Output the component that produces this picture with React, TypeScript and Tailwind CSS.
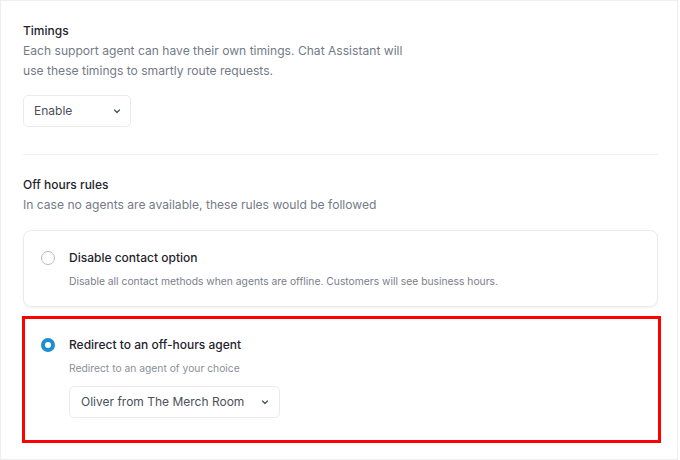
import React from "react";

function Chevron() {
  return (
    <svg width="10" height="10" viewBox="0 0 10 10" fill="none">
      <path d="M2.5 4 L5 6.5 L7.5 4" stroke="#4b5563" strokeWidth="1.3" strokeLinecap="round" strokeLinejoin="round" />
    </svg>
  );
}

export default function App() {
  return (
    <div className="w-[680px] h-[460px] bg-white" style={{ fontFamily: "Inter, 'Noto Sans', sans-serif" }}>
      <div className="w-[678px] h-[460px] border border-[#eeeeee] bg-white pl-[22px] pr-[20px] pt-[21px]">
        <div className="text-[12px] leading-[18px] font-medium text-[#1f242e]">Timings</div>
        <div className="mt-[1px] text-[12.1px] leading-[20px] text-[#747b87] w-[400px]">
          Each support agent can have their own timings. Chat Assistant will use these timings to smartly route requests.
        </div>
        <div className="mt-[14px] w-[108px] h-[32px] rounded-[5px] border border-[#ebebeb] flex items-center justify-between pl-[10px] pr-[8px]">
          <span className="text-[12px] text-[#4b505a]">Enable</span>
          <Chevron />
        </div>
        <div className="mt-[27px] h-px bg-[#f0f0f0] w-[635px]" />
        <div className="mt-[21px] text-[12px] leading-[18px] font-medium text-[#1f242e]">Off hours rules</div>
        <div className="mt-[1px] text-[12.1px] leading-[20px] text-[#747b87]">
          In case no agents are available, these rules would be followed
        </div>
        <div className="mt-[15px] w-[635px] h-[77px] rounded-[8px] border border-[#ebebeb] shadow-[0_1px_2px_rgba(0,0,0,0.06)] flex pl-[17px] pt-[19px]">
          <div className="w-[14px] h-[14px] rounded-full border border-[#b5b9bf] mt-[1px]" />
          <div className="ml-[14px]">
            <div className="text-[12px] leading-[16px] font-medium text-[#1f242e]">Disable contact option</div>
            <div className="mt-[8px] text-[10.3px] leading-[14px] text-[#7a808a]">
              Disable all contact methods when agents are offline. Customers will see business hours.
            </div>
          </div>
        </div>
        <div className="mt-[9px] -ml-[1px] w-[639px] h-[127px] border-[3px] border-[#ff0000] flex pl-[16px] pt-[18px]">
          <div className="w-[14px] h-[14px] rounded-full border-[4px] border-[#1b8fd2] mt-[1px] bg-white" />
          <div className="ml-[14px]">
            <div className="text-[12px] leading-[16px] font-medium text-[#1f242e]">Redirect to an off-hours agent</div>
            <div className="mt-[8px] text-[10.3px] leading-[14px] text-[#8a909a]">Redirect to an agent of your choice</div>
            <div className="mt-[11px] w-[211px] h-[32px] rounded-[5px] border border-[#ebebeb] flex items-center justify-between pl-[11px] pr-[9px]">
              <span className="text-[12px] text-[#4b505a]">Oliver from The Merch Room</span>
              <Chevron />
            </div>
          </div>
        </div>
      </div>
    </div>
  );
}
